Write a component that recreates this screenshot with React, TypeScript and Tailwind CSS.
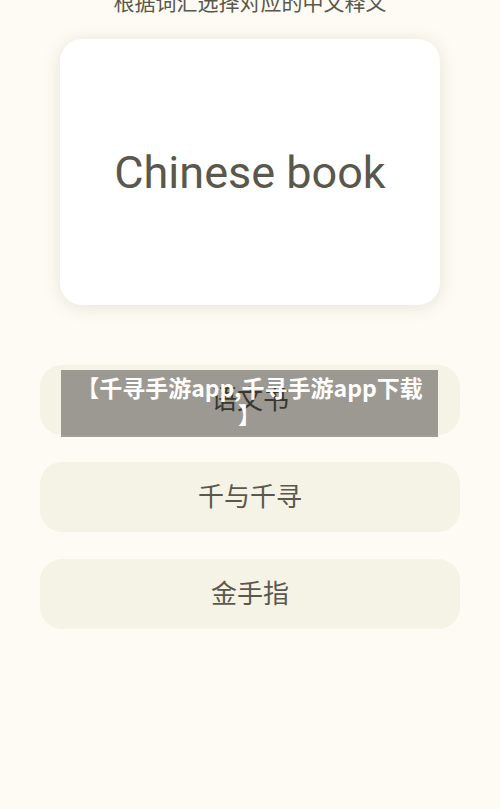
import React from 'react';

const options = ['语文书', '千与千寻', '金手指'];

const App: React.FC = () => {
  return (
    <div className="relative min-h-[809px] w-full overflow-hidden bg-[#fdfbf3] font-['Roboto','Noto_Sans_CJK_SC',sans-serif] text-[#5a574c]">
      {/* Prompt, scrolled partly off screen */}
      <div className="-mt-[13px] h-[32px] text-center text-[21px] leading-[32px]">根据词汇选择对应的中文释义</div>

      {/* Word card */}
      <div className="mx-[60px] mt-[20px] flex h-[266px] items-center justify-center rounded-[22px] bg-white shadow-[0_2px_18px_rgba(120,110,80,0.16)]">
        <span className="text-[45px] leading-none">Chinese book</span>
      </div>

      {/* Options */}
      <div className="mx-[40px] mt-[60px] flex flex-col gap-[27px]">
        {options.map((o) => (
          <button key={o} className="flex h-[70px] items-center justify-center rounded-[22px] bg-[#f5f2e6] text-[26px] text-[#5a574c]">
            {o}
          </button>
        ))}
      </div>

      {/* Banner overlay */}
      <div className="absolute left-[61px] top-[370px] flex h-[67px] w-[377px] items-start justify-center bg-black/[0.37] px-[10px] pt-[4px] text-center font-['Noto_Sans_CJK_SC',sans-serif] text-[23px] font-bold leading-[27px] text-white">
        <span>
          【千寻手游app,千寻手游app下载
          <br />】
        </span>
      </div>
    </div>
  );
};

export default App;
